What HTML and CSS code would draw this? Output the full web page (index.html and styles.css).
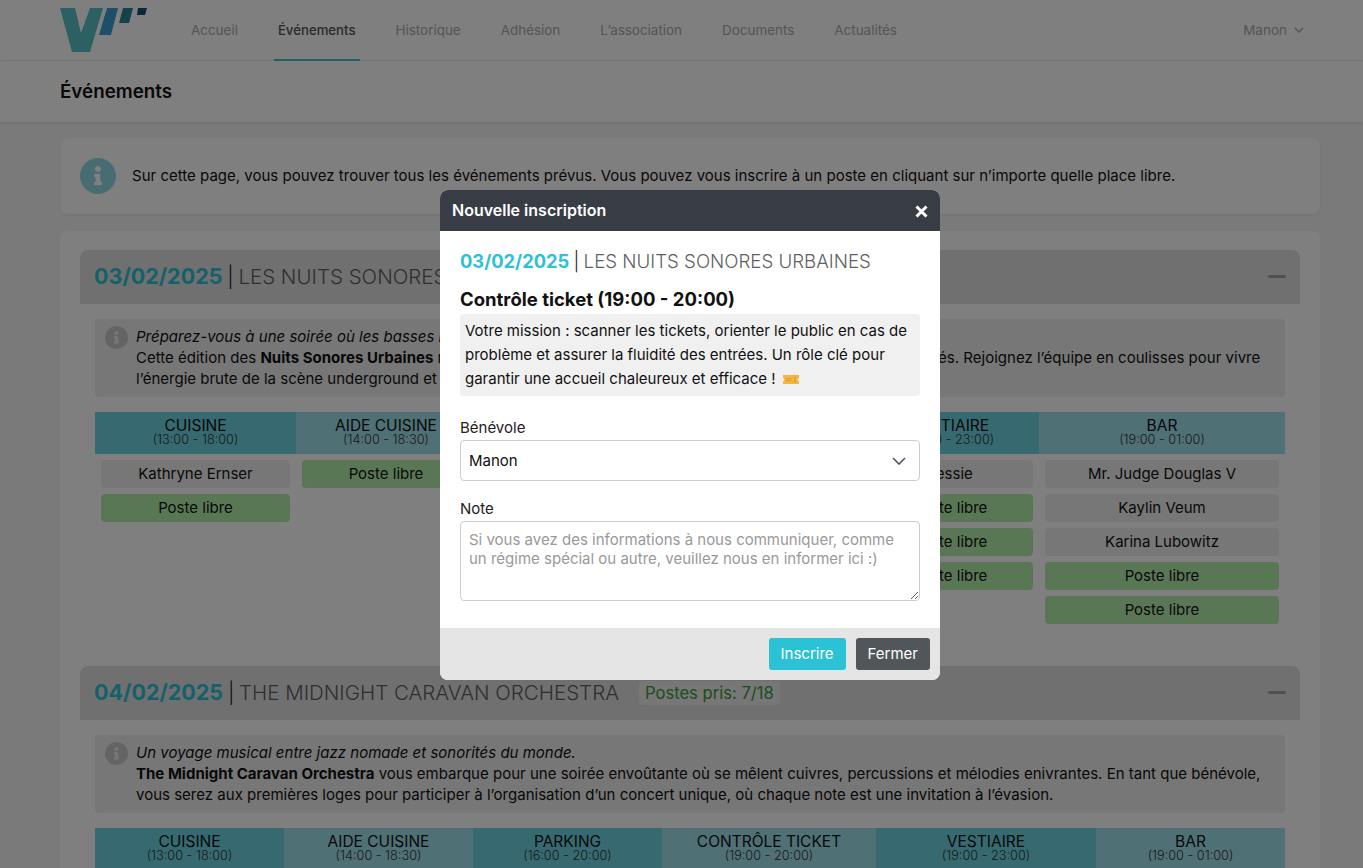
FILE: index.html
```html
<!DOCTYPE html>
<html lang="fr">
<head>
<meta charset="utf-8">
<title>Événements</title>
<link rel="stylesheet" href="styles.css">
</head>
<body>
<header class="topnav">
  <svg class="logo" width="87" height="44" viewBox="0 0 87 44">
    <path d="M0 0H15L21 25L30 0H43L30 44H12Z" fill="#58c0c4"/>
    <path d="M47 0H58L51 27H39Z" fill="#3c9ed0"/>
    <path d="M63 0H73L69 15H59Z" fill="#288494"/>
    <path d="M78 0H87L85 7H77Z" fill="#145070"/>
  </svg>
  <nav class="menu">
    <a class="menu-item">Accueil</a>
    <a class="menu-item active">Événements</a>
    <a class="menu-item">Historique</a>
    <a class="menu-item">Adhésion</a>
    <a class="menu-item">L’association</a>
    <a class="menu-item">Documents</a>
    <a class="menu-item">Actualités</a>
  </nav>
  <div class="user">Manon
    <svg width="10" height="6" viewBox="0 0 10 6"><path d="M1 1l4 4 4-4" fill="none" stroke="#aaa" stroke-width="1.5"/></svg>
  </div>
</header>
<div class="pagetitle"><h1>Événements</h1></div>
<main class="content">
  <section class="notice">
    <svg class="notice-icon" width="36" height="36" viewBox="8 8 496 496"><path fill="#8fd8e2" d="M256 8C119.043 8 8 119.083 8 256c0 136.997 111.043 248 248 248s248-111.003 248-248C504 119.083 392.957 8 256 8zm0 110c23.196 0 42 18.804 42 42s-18.804 42-42 42-42-18.804-42-42 18.804-42 42-42zm56 254c0 6.627-5.373 12-12 12h-88c-6.627 0-12-5.373-12-12v-24c0-6.627 5.373-12 12-12h12v-64h-12c-6.627 0-12-5.373-12-12v-24c0-6.627 5.373-12 12-12h64c6.627 0 12 5.373 12 12v100h12c6.627 0 12 5.373 12 12v24z"/></svg>
    <p>Sur cette page, vous pouvez trouver tous les événements prévus. Vous pouvez vous inscrire à un poste en cliquant sur n’importe quelle place libre.</p>
  </section>
  <section class="events">
    <article class="event">
      <div class="event-head">
        <h2><b>03/02/2025</b> <span class="bar">|</span> <span class="name">LES NUITS SONORES URBAINES</span></h2>
        <span class="minus"></span>
      </div>
      <div class="desc">
        <svg class="desc-icon" width="23" height="23" viewBox="8 8 496 496"><path fill="#c8c8c8" d="M256 8C119.043 8 8 119.083 8 256c0 136.997 111.043 248 248 248s248-111.003 248-248C504 119.083 392.957 8 256 8zm0 110c23.196 0 42 18.804 42 42s-18.804 42-42 42-42-18.804-42-42 18.804-42 42-42zm56 254c0 6.627-5.373 12-12 12h-88c-6.627 0-12-5.373-12-12v-24c0-6.627 5.373-12 12-12h12v-64h-12c-6.627 0-12-5.373-12-12v-24c0-6.627 5.373-12 12-12h64c6.627 0 12 5.373 12 12v100h12c6.627 0 12 5.373 12 12v24z"/></svg>
        <p><i>Préparez-vous à une soirée où les basses résonnent jusque dans les murs de la ville.</i><br>
        Cette édition des <b>Nuits Sonores Urbaines</b> réunit des artistes émergents, des DJ locaux et des collectifs passionnés. Rejoignez l’équipe en coulisses pour vivre<br>
        l’énergie brute de la scène underground et vibrez avec nous toute la nuit.</p>
      </div>
      <div class="slots slots-a">
        <div class="col"><div class="col-head dark">CUISINE<small>(13:00 - 18:00)</small></div><div class="slot">Kathryne Ernser</div><div class="slot free">Poste libre</div></div>
        <div class="col"><div class="col-head">AIDE CUISINE<small>(14:00 - 18:30)</small></div><div class="slot free">Poste libre</div></div>
        <div class="col"><div class="col-head dark">PARKING<small>(16:00 - 20:00)</small></div><div class="slot free">Poste libre</div></div>
        <div class="col"><div class="col-head">CONTRÔLE TICKET<small>(19:00 - 20:00)</small></div><div class="slot free">Poste libre</div></div>
        <div class="col"><div class="col-head dark">VESTIAIRE<small>(19:00 - 23:00)</small></div><div class="slot">Jessie</div><div class="slot free">Poste libre</div><div class="slot free">Poste libre</div><div class="slot free">Poste libre</div></div>
        <div class="col"><div class="col-head">BAR<small>(19:00 - 01:00)</small></div><div class="slot">Mr. Judge Douglas V</div><div class="slot">Kaylin Veum</div><div class="slot">Karina Lubowitz</div><div class="slot free">Poste libre</div><div class="slot free">Poste libre</div></div>
      </div>
    </article>
    <article class="event">
      <div class="event-head">
        <h2><b>04/02/2025</b> <span class="bar">|</span> <span class="name">THE MIDNIGHT CARAVAN ORCHESTRA</span></h2>
        <span class="taken">Postes pris: 7/18</span>
        <span class="minus"></span>
      </div>
      <div class="desc">
        <svg class="desc-icon" width="23" height="23" viewBox="8 8 496 496"><path fill="#c8c8c8" d="M256 8C119.043 8 8 119.083 8 256c0 136.997 111.043 248 248 248s248-111.003 248-248C504 119.083 392.957 8 256 8zm0 110c23.196 0 42 18.804 42 42s-18.804 42-42 42-42-18.804-42-42 18.804-42 42-42zm56 254c0 6.627-5.373 12-12 12h-88c-6.627 0-12-5.373-12-12v-24c0-6.627 5.373-12 12-12h12v-64h-12c-6.627 0-12-5.373-12-12v-24c0-6.627 5.373-12 12-12h64c6.627 0 12 5.373 12 12v100h12c6.627 0 12 5.373 12 12v24z"/></svg>
        <p><i>Un voyage musical entre jazz nomade et sonorités du monde.</i><br>
        <b>The Midnight Caravan Orchestra</b> vous embarque pour une soirée envoûtante où se mêlent cuivres, percussions et mélodies enivrantes. En tant que bénévole,<br>
        vous serez aux premières loges pour participer à l’organisation d’un concert unique, où chaque note est une invitation à l’évasion.</p>
      </div>
      <div class="slots slots-b">
        <div class="col"><div class="col-head dark">CUISINE<small>(13:00 - 18:00)</small></div></div>
        <div class="col"><div class="col-head">AIDE CUISINE<small>(14:00 - 18:30)</small></div></div>
        <div class="col"><div class="col-head dark">PARKING<small>(16:00 - 20:00)</small></div></div>
        <div class="col"><div class="col-head">CONTRÔLE TICKET<small>(19:00 - 20:00)</small></div></div>
        <div class="col"><div class="col-head dark">VESTIAIRE<small>(19:00 - 23:00)</small></div></div>
        <div class="col"><div class="col-head">BAR<small>(19:00 - 01:00)</small></div></div>
      </div>
    </article>
  </section>
</main>
<div class="overlay"></div>
<div class="modal">
  <div class="modal-head">
    <span>Nouvelle inscription</span>
    <svg width="13" height="13" viewBox="0 0 13 13"><path d="M1.5 1.5l10 10m0-10l-10 10" stroke="#fff" stroke-width="3"/></svg>
  </div>
  <div class="modal-body">
    <h3 class="modal-event"><b>03/02/2025</b> <span class="bar">|</span> <span class="name">LES NUITS SONORES URBAINES</span></h3>
    <h4 class="modal-post">Contrôle ticket (19:00 - 20:00)</h4>
    <p class="mission">Votre mission : scanner les tickets, orienter le public en cas de<br>problème et assurer la fluidité des entrées. Un rôle clé pour<br>garantir une accueil chaleureux et efficace !
      <svg class="ticket" width="16" height="11" viewBox="0 0 16 11"><path fill="#f4b63f" d="M0 1h16v3a1.5 1.5 0 0 0 0 3v3H0V7a1.5 1.5 0 0 0 0-3z"/><path fill="#e0a030" d="M2 4h7v1H2zM2 6h7v1H2zM11 3h2v2h-2zM11 6h2v2h-2z"/></svg>
    </p>
    <label class="field-label benevole-label">Bénévole</label>
    <div class="select">Manon
      <svg width="14" height="8" viewBox="0 0 14 8"><path d="M1 1l6 6 6-6" fill="none" stroke="#4b5563" stroke-width="1.6"/></svg>
    </div>
    <label class="field-label note-label">Note</label>
    <textarea class="note" placeholder="Si vous avez des informations à nous communiquer, comme un régime spécial ou autre, veuillez nous en informer ici :)"></textarea>
  </div>
  <div class="modal-foot">
    <button class="btn primary">Inscrire</button>
    <button class="btn secondary">Fermer</button>
  </div>
</div>
</body>
</html>
```

FILE: styles.css
```css
* { box-sizing: border-box; }
html, body { height: 868px; overflow: hidden; }
body {
  margin: 0;
  background: #f5f5f5;
  color: #111;
  font-family: "Inter", "Liberation Sans", sans-serif;
  font-size: 14px;
}
p, h1, h2, h3, h4 { margin: 0; }

.topnav {
  height: 61px;
  background: #fff;
  border-bottom: 1px solid #eee;
  padding: 0 59px 0 60px;
  display: flex;
  align-items: stretch;
  gap: 40px;
}
.logo { margin-top: 8px; }
.menu { display: flex; gap: 32px; }
.menu-item {
  padding: 0 4px;
  height: 61px;
  line-height: 60px;
  font-size: 13.45px;
  color: #aaa;
  border-bottom: 2px solid transparent;
}
.menu-item.active { color: #555; font-size: 13.2px; font-weight: 500; border-bottom-color: #3ec5cf; }
.user {
  margin-left: auto;
  font-size: 13.5px;
  color: #aaa;
  display: flex;
  align-items: center;
  gap: 7px;
  height: 59px;
}

.pagetitle {
  height: 61px;
  background: #fff;
  padding: 0 60px 1px;
  display: flex;
  align-items: center;
  box-shadow: 0 1px 4px rgba(0,0,0,.12);
  position: relative;
}
.pagetitle h1 { font-size: 18.8px; font-weight: 600; color: #111; }

.content { padding: 16px 43px 0 60px; }
.notice {
  height: 76px;
  background: #fff;
  border-radius: 8px;
  padding: 0 20px 1px;
  display: flex;
  align-items: center;
  gap: 16px;
  box-shadow: 0 1px 4px rgba(0,0,0,.06);
}
.notice p { font-size: 15px; letter-spacing: .01px; }
.events {
  margin-top: 17px;
  background: #fff;
  border-radius: 8px;
  padding: 19px 20px;
  display: flex;
  flex-direction: column;
  gap: 42px;
}
.event-head {
  height: 53.5px;
  background: #e0e0e0;
  border-radius: 8px 8px 0 0;
  padding: 0 14px 2px;
  display: flex;
  align-items: center;
  gap: 20px;
}
.event-head h2 { font-size: 20.5px; font-weight: 300; white-space: nowrap; }
.event-head h2 b { font-size: 21.5px; font-weight: 700; color: #2bc2d6; }
.bar { color: #222; margin: 0 -1px; }
.name { color: #5f5f5f; font-weight: 300; }
.taken {
  font-size: 16.6px;
  line-height: 24px;
  color: #3c9a3c;
  background: #eee;
  padding: 0 6px;
  border-radius: 4px;
  margin-top: 2px;
}
.minus {
  width: 18px;
  height: 3px;
  background: #a0a0a0;
  border-radius: 2px;
  margin-left: auto;
  margin-top: 2px;
}
.desc {
  margin: 15px;
  height: 78.5px;
  background: #eee;
  border-radius: 4px;
  padding: 7px 10px;
  display: flex;
  gap: 8px;
  font-size: 15px;
  line-height: 21px;
  letter-spacing: .01px;
}
.desc p { white-space: nowrap; }
.desc-icon { flex: none; }
.slots { display: grid; margin: 0 15px; }
.slots-a { grid-template-columns: 201px 180px 184px 201px 178px 246px; }
.slots-b { grid-template-columns: 189px 189px 189px 214px 220px 189px; }
.col { display: flex; flex-direction: column; align-items: stretch; gap: 6px; }
.col-head {
  height: 42px;
  background: #9fe0ea;
  text-align: center;
  font-size: 15.5px;
  line-height: 15px;
  padding-top: 6px;
  white-space: nowrap;
  overflow: hidden;
  color: #111;
}
.col-head.dark { background: #6cd4e0; }
.col-head small { display: block; font-size: 12.7px; font-weight: 300; line-height: 14px; color: #333; }
.slot {
  margin: 0 6px;
  height: 28px;
  line-height: 28px;
  text-align: center;
  font-size: 15px;
  background: #eee;
  border-radius: 4px;
  white-space: nowrap;
}
.slot.free { background: #b4eeaa; }

.overlay { position: fixed; inset: 0; background: rgba(0,0,0,.5); }
.modal {
  position: fixed;
  left: 440px;
  top: 190px;
  width: 500px;
  height: 490px;
  background: #fff;
  border-radius: 8px;
  display: flex;
  flex-direction: column;
  overflow: hidden;
}
.modal-head {
  height: 41px;
  flex: none;
  background: #383c44;
  color: #fff;
  padding: 0 12px 2px;
  display: flex;
  align-items: center;
  justify-content: space-between;
  font-size: 16px;
  font-weight: 600;
}
.modal-head svg { margin-top: 3px; }
.modal-body { flex: 1; padding: 18px 20px 0; }
.modal-event { font-size: 18.7px; font-weight: 300; line-height: 24px; white-space: nowrap; }
.modal-event b { font-size: 18.3px; font-weight: 700; color: #2bc2d6; }
.modal-post { margin-top: 13px; font-size: 18.5px; font-weight: 700; line-height: 24px; color: #111; }
.mission {
  margin-top: 3px;
  background: #f0f0f0;
  border-radius: 4px;
  padding: 5px 5px 4px;
  height: 82px;
  font-size: 15px;
  line-height: 24px;
  white-space: nowrap;
}
.ticket { vertical-align: -1px; margin-left: 3px; }
.field-label { display: block; font-size: 15px; line-height: 20px; color: #222; }
.benevole-label { margin-top: 22px; }
.note-label { margin-top: 18px; }
.select {
  margin-top: 2px;
  height: 41px;
  border: 1px solid #ccc;
  border-radius: 4px;
  padding: 0 13px 0 8px;
  display: flex;
  align-items: center;
  justify-content: space-between;
  font-size: 15px;
}
.note {
  display: block;
  margin-top: 2px;
  width: 100%;
  height: 80px;
  border: 1px solid #ccc;
  border-radius: 4px;
  padding: 8px;
  font-family: inherit;
  font-size: 15px;
  line-height: 19px;
}
.note::placeholder { color: #999; }
.modal-foot {
  height: 52px;
  flex: none;
  background: #e5e5e5;
  padding: 0 10px;
  display: flex;
  align-items: center;
  justify-content: flex-end;
  gap: 10px;
}
.btn {
  height: 32px;
  border: 0;
  border-radius: 3px;
  padding: 0 12px 2px;
  color: #fff;
  font-family: inherit;
  font-size: 15px;
}
.btn.primary { background: #2bc2d6; }
.btn.secondary { background: #50565a; }
```
